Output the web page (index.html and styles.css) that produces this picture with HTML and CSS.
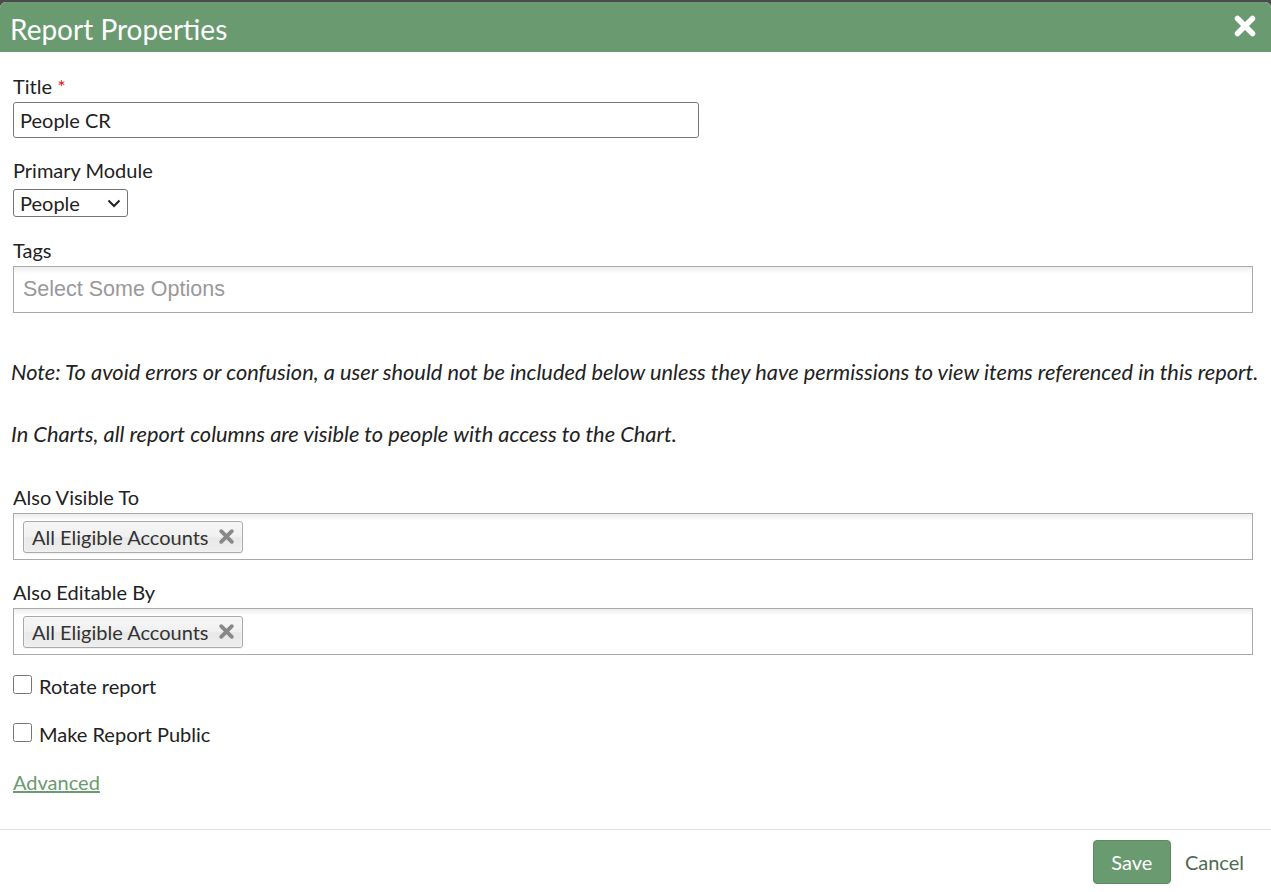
FILE: index.html
```html
<!DOCTYPE html>
<html lang="en">
<head>
    <meta charset="UTF-8">
    <meta name="viewport" content="width=device-width, initial-scale=1.0">
    <title>Report Properties</title>
    <link rel="stylesheet" href="styles.css">
</head>
<body>
    <div class="dialog">
        <div class="dialog-header">
            <h1>Report Properties</h1>
            <svg class="close" width="24" height="24" viewBox="0 0 24 24" aria-label="Close">
                <path d="M4.5 4.5 L19.5 19.5 M19.5 4.5 L4.5 19.5" stroke="#fff" stroke-width="5.5" stroke-linecap="round"/>
            </svg>
        </div>

        <form class="dialog-body">
            <div class="field">
                <label>Title <span class="required">*</span></label>
                <input type="text" class="text-input" value="People CR">
            </div>

            <div class="field field-select">
                <label>Primary Module</label>
                <span class="select-wrap">
                    <select class="select-input">
                        <option>People</option>
                    </select>
                    <svg class="select-arrow" width="14" height="9" viewBox="0 0 14 9"><path d="M1.5 1.5 L7 7 L12.5 1.5" fill="none" stroke="#222" stroke-width="2"/></svg>
                </span>
            </div>

            <div class="field">
                <label>Tags</label>
                <div class="chosen">
                    <span class="placeholder">Select Some Options</span>
                </div>
            </div>

            <p class="note">Note: To avoid errors or confusion, a user should not be included below unless they have permissions to view items referenced in this report.</p>
            <p class="note">In Charts, all report columns are visible to people with access to the Chart.</p>

            <div class="field">
                <label>Also Visible To</label>
                <div class="chosen">
                    <span class="chip">All Eligible Accounts
                        <svg class="chip-x" width="17" height="17" viewBox="0 0 16 16"><path d="M3 3 L13 13 M13 3 L3 13" stroke="#888" stroke-width="3.6" stroke-linecap="round"/></svg>
                    </span>
                </div>
            </div>

            <div class="field">
                <label>Also Editable By</label>
                <div class="chosen">
                    <span class="chip">All Eligible Accounts
                        <svg class="chip-x" width="17" height="17" viewBox="0 0 16 16"><path d="M3 3 L13 13 M13 3 L3 13" stroke="#888" stroke-width="3.6" stroke-linecap="round"/></svg>
                    </span>
                </div>
            </div>

            <label class="check"><input type="checkbox"> Rotate report</label>
            <label class="check"><input type="checkbox"> Make Report Public</label>

            <a href="#" class="advanced">Advanced</a>
        </form>

        <div class="dialog-footer">
            <button type="button" class="btn-save">Save</button>
            <a href="#" class="cancel">Cancel</a>
        </div>
    </div>
</body>
</html>
```

FILE: styles.css
```css
* {
  box-sizing: border-box;
}

body {
  margin: 0;
  background-color: #4a4a4a;
  font-family: "Lato", "Noto Sans", sans-serif;
  font-size: 20px;
  color: #222;
}

.dialog {
  margin-top: 2px;
  background-color: #fff;
  border-radius: 6px 6px 0 0;
  min-height: 890px;
  overflow: hidden;
}

.dialog-header {
  display: flex;
  align-items: center;
  justify-content: space-between;
  height: 50px;
  padding: 0 14px 0 10px;
  background-color: #6a9a70;
  color: #fff;
}

.dialog-header h1 {
  margin: 0;
  font-size: 28px;
  font-weight: normal;
  padding-top: 4px;
}

.close {
  cursor: pointer;
  margin-top: -2px;
}

.dialog-body {
  padding: 22px 18px 35px 13px;
}

.field {
  margin-bottom: 20px;
}

.field-select {
  margin-bottom: 21px;
}

.field label {
  display: block;
  margin-bottom: 4px;
  line-height: 24px;
}

.required {
  color: #e02020;
  font-size: 20px;
}

.text-input {
  display: block;
  width: 686px;
  height: 36px;
  padding: 2px 6px;
  border: 1px solid #767676;
  border-radius: 3px;
  font-family: inherit;
  font-size: 20px;
  color: #222;
}

.select-wrap {
  position: relative;
  display: inline-block;
  margin-top: 3px;
}

.select-input {
  display: block;
  height: 28px;
  width: 115px;
  padding: 0 6px;
  border: 1px solid #767676;
  border-radius: 3px;
  font-family: inherit;
  font-size: 20px;
  color: #222;
  background-color: #fff;
  appearance: none;
  -webkit-appearance: none;
}

.select-arrow {
  position: absolute;
  right: 7px;
  top: 10px;
  pointer-events: none;
}

.chosen {
  display: flex;
  align-items: center;
  width: 1240px;
  height: 47px;
  padding: 0 9px;
  border: 1px solid #aaa;
  background-image: linear-gradient(#eee 1%, #fff 15%);
}

.placeholder {
  font-family: "Liberation Sans", Arial, sans-serif;
  font-size: 21.5px;
  color: #999;
}

.chip {
  display: inline-flex;
  align-items: center;
  height: 32px;
  padding: 0 7px 0 8px;
  border: 1px solid #aaa;
  border-radius: 3px;
  background-image: linear-gradient(#f4f4f4 20%, #f0f0f0 50%, #e8e8e8 52%, #eee 100%);
  box-shadow: 0 0 2px #fff inset, 0 1px 0 rgba(0, 0, 0, 0.05);
  color: #333;
}

.chip-x {
  margin-left: 9px;
}

.note {
  margin: 0;
  margin-left: -2px;
  padding: 24px 0 10px;
  font-style: italic;
  font-size: 21.8px;
  line-height: 30px;
  white-space: nowrap;
}

.note + .note {
  padding-top: 22px;
  margin-bottom: 26px;
}

.check {
  display: flex;
  align-items: center;
  margin-bottom: 20px;
  line-height: 28px;
}

.field + .check {
  margin-top: -3px;
}

.check input {
  width: 19px;
  height: 19px;
  margin: 0 7px 4px 0;
}

.advanced {
  display: inline-block;
  margin-top: 2px;
  color: #6a9a70;
}

.dialog-footer {
  display: flex;
  align-items: center;
  justify-content: flex-end;
  gap: 14px;
  padding: 10px 27px 10px 25px;
  border-top: 1px solid #ddd;
}

.btn-save {
  width: 78px;
  height: 44px;
  border: 1px solid #5a8a60;
  border-radius: 4px;
  background-color: #6a9a70;
  color: #fff;
  font-family: inherit;
  font-size: 20px;
  cursor: pointer;
}

.cancel {
  color: #4d6a52;
  font-size: 20px;
  text-decoration: none;
}
```
